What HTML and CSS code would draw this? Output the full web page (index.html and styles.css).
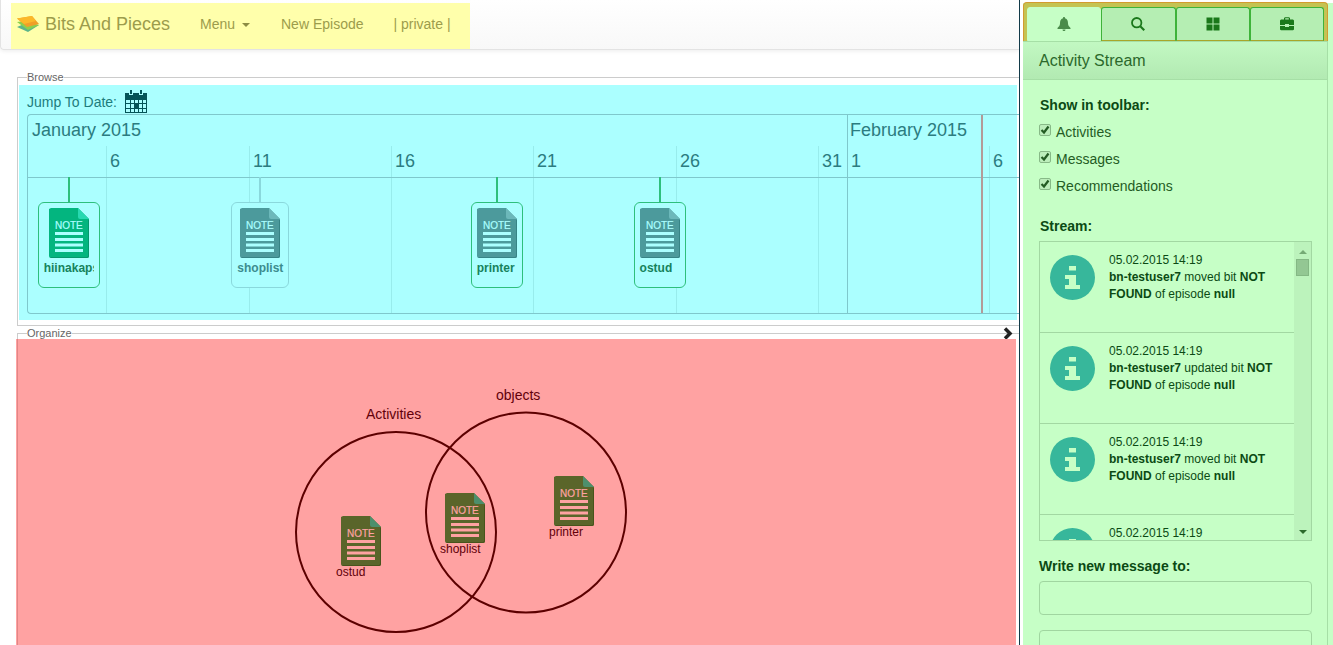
FILE: index.html
```html
<!DOCTYPE html>
<html lang="en">
<head>
<meta charset="utf-8">
<title>Bits And Pieces</title>
<link rel="stylesheet" href="styles.css">
</head>
<body>
<svg class="sprite" aria-hidden="true">
  <symbol id="note" viewBox="0 0 40 50">
    <path d="M2 0H29L40 11V48a2 2 0 0 1-2 2H2a2 2 0 0 1-2-2V1z"/>
    <path class="fold" d="M29 0L40 11H31a2 2 0 0 1-2-2z"/>
    <path class="edge" d="M39 12h1v36a2 2 0 0 1-2 2H2l-1-1h37l1-1z"/>
    <text class="note-text" x="6" y="21">NOTE</text>
    <path class="rule" d="M6 24h28v3H6zM6 30h28v3H6zM6 35.500h28v3H6zM6 41h28v3H6z"/>
  </symbol>
  <symbol id="info" viewBox="0 0 45 45">
    <circle cx="22.500" cy="22.500" r="22.500"/>
    <path class="mark" d="M19 11h7v4.500h-7zM15 20h11v10h4v4H15v-4h4v-6h-4z"/>
  </symbol>
</svg>
<div class="app">
  <div class="main">
    <header class="topbar">
      <nav class="nav">
        <a class="brand" href="#">
          <svg class="logo" viewBox="0 0 24 18" aria-hidden="true">
            <path fill="#5cb58a" d="M1 12l7-3 15 1-11 7z"/>
            <path fill="#8ccf4c" d="M1 7l8-1 14 4-11 5z"/>
            <path fill="#f09f28" d="M1 3.500l15-2.500 7 8-12 3z"/>
            <path fill="#fbb829" d="M1 3.500l15-2.500 4 5-12 3z"/>
          </svg>
          Bits And Pieces</a>
        <button class="nav-item" type="button">Menu <span class="caret"></span></button>
        <a class="nav-item" href="#">New Episode</a>
        <span class="nav-item">| private |</span>
      </nav>
    </header>

    <fieldset class="group">
      <legend>Browse</legend>
      <div class="browse">
        <button class="jump" type="button">Jump To Date:
          <svg class="calendar" viewBox="0 0 22 23" aria-hidden="true">
            <path d="M0 3h4v2h4V3h6v2h4V3h4v20H0z"/>
            <path d="M5 0h2v4H5zM15 0h2v4h-2z"/>
            <path class="cell" d="M1 10h4v3H1zM6 10h3v3H6zM10 10h3v3h-3zM14 10h3v3h-3zM18 10h3v3h-3zM1 14h4v4H1zM6 14h3v4H6zM14 14h3v4h-3zM18 14h3v4h-3zM1 19h4v3H1zM6 19h3v3H6zM10 19h3v3h-3zM14 19h3v3h-3zM18 19h3v3h-3z"/>
          </svg>
        </button>
        <div class="timeline">
          <div class="months"><span>January 2015</span><span>February 2015</span></div>
          <div class="days"><span></span><span>6</span><span>11</span><span>16</span><span>21</span><span>26</span><span>31</span><span class="first">1</span><span>6</span></div>
          <div class="lanes"><i></i><i></i><i></i><i></i><i></i><i></i><i></i><i class="first"></i><i></i></div>
          <div class="now" style="left:96%"></div>
          <div class="event fresh" style="left:4.1%"><div class="card"><svg class="note"><use href="#note"/></svg><b class="long">hiinakapsas</b></div></div>
          <div class="event dim" style="left:23.4%"><div class="card"><svg class="note"><use href="#note"/></svg><b>shoplist</b></div></div>
          <div class="event" style="left:47.2%"><div class="card"><svg class="note"><use href="#note"/></svg><b>printer</b></div></div>
          <div class="event" style="left:63.6%"><div class="card"><svg class="note"><use href="#note"/></svg><b>ostud</b></div></div>
        </div>
      </div>
    </fieldset>

    <fieldset class="group organize">
      <legend>Organize</legend>
      <button class="expand" type="button" aria-label="Expand"><svg viewBox="0 0 10 13"><path d="M2 1.500L7 6.500L2 11.500" fill="none" stroke="#222" stroke-width="3.500"/></svg></button>
      <div class="canvas">
        <svg class="circles" viewBox="0 0 640 310" aria-hidden="true"><circle cx="380" cy="193" r="100"/><circle cx="510" cy="173.500" r="100"/></svg>
        <span class="set" style="left:350px;top:66px">Activities</span>
        <span class="set" style="left:480px;top:47px">objects</span>
        <div class="node" style="left:320px;top:177px"><svg class="note"><use href="#note"/></svg>ostud</div>
        <div class="node" style="left:424px;top:154px"><svg class="note"><use href="#note"/></svg>shoplist</div>
        <div class="node" style="left:533px;top:137px"><svg class="note"><use href="#note"/></svg>printer</div>
      </div>
    </fieldset>
  </div>

  <aside class="side">
    <div class="panel">
      <div class="tabs">
        <button class="tab active" type="button" aria-label="Activity stream"><svg viewBox="0 0 14 14"><path d="M7 0c.8 0 1 .6 1 1.200C10.500 2 11 4 11 6.500c0 2.500 1.500 3 2.500 4.500v1H.5v-1C1.500 9.500 3 9 3 6.500 3 4 3.500 2 6 1.200 6 .6 6.200 0 7 0zM5.500 12.500h3c0 2-3 2-3 0z"/></svg></button>
        <button class="tab" type="button" aria-label="Search"><svg viewBox="0 0 14 14"><circle cx="5.700" cy="5.700" r="4.700" fill="none" stroke="#1a781a" stroke-width="1.800"/><path d="M8.500 10L10 8.500l4 4-1.500 1.500z"/></svg></button>
        <button class="tab" type="button" aria-label="Bits"><svg viewBox="0 0 14 14"><path d="M.5 .5h6v6h-6zM7.500 .5h6v6h-6zM.5 7.500h6v6h-6zM7.500 7.500h6v6h-6z"/></svg></button>
        <button class="tab" type="button" aria-label="Toolbox"><svg viewBox="0 0 14 14"><path fill-rule="evenodd" d="M4 2.500V1L5 .2h4l1 .8v1.500h3l1 1V8H9V7H5v1H0V3.500l1-1zM5.200 2.500h3.600V1.300H5.200zM0 9h5v1h4V9h5v3.500l-1 .8H1l-1-.8z"/></svg></button>
      </div>
      <h2 class="heading">Activity Stream</h2>
      <div class="content">
        <h3>Show in toolbar:</h3>
        <label class="check"><input type="checkbox" checked>Activities</label>
        <label class="check"><input type="checkbox" checked>Messages</label>
        <label class="check"><input type="checkbox" checked>Recommendations</label>
        <h3 class="stream-title">Stream:</h3>
        <div class="stream">
          <div class="list">
            <div class="item"><svg class="info"><use href="#info"/></svg><p>05.02.2015 14:19<br><b>bn-testuser7</b> moved bit <b>NOT FOUND</b> of episode <b>null</b></p></div>
            <div class="item"><svg class="info"><use href="#info"/></svg><p>05.02.2015 14:19<br><b>bn-testuser7</b> updated bit <b>NOT FOUND</b> of episode <b>null</b></p></div>
            <div class="item"><svg class="info"><use href="#info"/></svg><p>05.02.2015 14:19<br><b>bn-testuser7</b> moved bit <b>NOT FOUND</b> of episode <b>null</b></p></div>
            <div class="item"><svg class="info"><use href="#info"/></svg><p>05.02.2015 14:19</p></div>
          </div>
          <div class="scroll"><span class="up"></span><span class="thumb"></span><span class="down"></span></div>
        </div>
        <label class="message" for="to">Write new message to:</label>
        <input class="field" id="to" type="text">
        <textarea class="field area" aria-label="Message"></textarea>
      </div>
    </div>
  </aside>
</div>
</body>
</html>
```
FILE: styles.css
```css
* { box-sizing: border-box; }
body { margin: 0; background: #fff; font: 14px/20px "Liberation Sans", Arial, sans-serif; color: #0b4a14; }
button { font: inherit; color: inherit; background: none; border: 0; padding: 0; }
a { color: inherit; text-decoration: none; }
.sprite { position: absolute; width: 0; height: 0; }

.app { display: flex; height: 100vh; overflow: hidden; }
.main { flex: 1; min-width: 0; display: flex; flex-direction: column; overflow: hidden; border-right: 1px solid #123a48; }

.topbar { height: 50px; flex: none; padding: 3px 10px 0; background: linear-gradient(#fff, #f8f8f8); border: 1px solid #e3e3e3; border-width: 0 0 1px 1px; border-radius: 0 0 0 4px; box-shadow: 0 1px 4px rgba(0, 0, 0, .08); }
.nav { display: inline-flex; align-items: center; gap: 30px; height: 46px; padding: 0 19px 4px 5px; background: #ffffab; color: #9c9c4c; }
.brand { display: flex; align-items: center; gap: 5px; font-size: 18px; }
.logo { width: 24px; height: 18px; }
.caret { display: inline-block; margin: 0 1px 0 3px; vertical-align: middle; border: 4px solid transparent; border-top-color: #8c8c44; border-bottom: 0; }

.group { flex: none; min-width: 0; margin: 21px -3px 0 17px; padding: 2px 4px 5px 1px; border: 1px solid #ccc; }
legend { margin-left: 8px; padding: 0; font-size: 11px; line-height: 12px; color: #666; }
.browse { padding: 4px 0 6px 8px; background: #abffff; color: #147d7d; }
.jump { display: flex; align-items: center; gap: 8px; height: 25px; color: #1e7c7c; }
.calendar { width: 22px; height: 23px; fill: #045458; }
.cell { fill: #abffff; }

.timeline { position: relative; height: 200px; margin-right: -4px; display: flex; flex-direction: column; border: 1px solid #7fc8cc; border-right: 0; border-radius: 4px 0 0 4px; overflow: hidden; color: #2c7c80; font-size: 18px; }
.months { display: grid; grid-template-columns: 819fr 174fr; height: 31px; line-height: 30px; }
.months span { padding-left: 4px; }
.months span + span { padding-left: 2px; border-left: 1px solid #7fc8cc; }
.days, .lanes { display: grid; grid-template-columns: 78fr 143fr 142fr 142fr 143fr 142fr 29fr 142fr 32fr; }
.days { height: 32px; line-height: 30px; border-bottom: 1px solid #7fc8cc; }
.days span { padding-left: 3px; border-left: 1px solid #98ecec; }
.lanes { flex: 1; }
.lanes i { border-left: 1px solid #98ecec; }
.days span:first-child, .lanes i:first-child { border: 0; }
.days .first, .lanes .first { border-left-color: #7fc8cc; }
.now { position: absolute; top: 0; bottom: 0; width: 2px; background: #b39a98; }
.event { position: absolute; top: 62px; display: flex; flex-direction: column; align-items: center; transform: translateX(-50%); color: #16825c; --line: #2ebf7c; }
.event::before { content: ""; width: 2px; height: 25px; background: var(--line); }
.event.dim { color: #3c8c8e; --line: #8ad8dc; }
.card { min-width: 52px; height: 86px; padding: 5px; display: flex; flex-direction: column; align-items: center; border: 1px solid var(--line); border-radius: 6px; background: #abffff; font-size: 12px; line-height: 14px; }
.card b { align-self: flex-start; margin-top: 3px; }
.card .long { width: 50px; overflow: hidden; }

.note { display: block; flex: none; width: 40px; height: 50px; fill: #4c9a9c; --paper: #abffff; --fold: #6cb8ba; --edge: #368486; }
.note-text, .rule { fill: var(--paper); }
.note-text { font: 10px "Liberation Sans", Arial, sans-serif; stroke: var(--paper); stroke-width: .2px; }
.fold { fill: var(--fold); }
.edge { fill: var(--edge); }
.fresh .note { fill: #03b57f; --fold: #28d8b0; --edge: #04986c; }

.organize { position: relative; flex: 1; margin-top: 1px; padding: 0 5px 0 1px; border-bottom: 0; }
.canvas { position: relative; height: 100%; min-height: 306px; margin-left: -3px; background: linear-gradient(90deg, #ffa2a2 1px, #e08686 1px, #e08686 2px, #ffa2a2 2px); color: #62000a; }
.circles { position: absolute; width: 640px; height: 310px; fill: none; stroke: #5c0000; stroke-width: 2px; }
.set, .node { position: absolute; }
.set { line-height: 18px; }
.node { font-size: 12px; line-height: 13px; }
.node .note { margin-left: 5px; fill: #5a652a; --paper: #ffa2a2; --fold: #4d8f6c; --edge: #48541c; }
.expand { position: absolute; right: 8px; top: -12px; width: 10px; height: 13px; line-height: 0; }
.expand svg { width: 10px; height: 13px; }

.side { width: 313px; flex: none; padding: 2px 0 0 3px; overflow: hidden; }
.panel { height: 100%; padding-right: 5px; background: linear-gradient(#c6ffc6, #c6ffc6) 0 1px no-repeat; }
.tabs { display: flex; height: 39px; padding: 4px 3px 0; border: 1px solid #d39b30; border-width: 1px 1px 0; border-radius: 4px 4px 0 0; background: #c4c352; }
.tab { flex: 1; display: flex; align-items: center; justify-content: center; background: #b5eeb3; border: 1px solid #3eb33a; border-bottom-color: #a8a62a; border-radius: 3px 3px 0 0; fill: #1a781a; }
.tab.active { background: #c6ffc6; border-color: #c6ffc6; fill: #4a8c4a; }
.tab svg { width: 14px; height: 14px; margin-bottom: 1px; }
.heading { margin: 0; height: 39px; padding-left: 16px; font-size: 16px; font-weight: normal; line-height: 38px; color: #2b682b; background: linear-gradient(#c2f8c2, #b2eab2); border: 1px solid #a6dfa6; border-width: 1px 1px 1px 0; }
.content { height: 100%; padding: 15px 15px 0 16px; border-right: 1px solid #a6dfa6; }
h3 { margin: 0 0 7px; padding-left: 1px; font-size: 14px; line-height: 20px; }
.check { display: flex; align-items: flex-start; gap: 5px; height: 27px; color: #245c24; }
.check input { appearance: none; flex: none; width: 12px; height: 12px; margin: 2px 0 0; border: 1px solid #87b987; border-radius: 2px; background: #bceebb; }
.check input:checked { background: url("data:image/svg+xml,%3Csvg xmlns='http://www.w3.org/2000/svg' viewBox='0 0 10 10'%3E%3Cpath d='M1.500 5L4 7.500L8.500 1.500' fill='none' stroke='%23245c24' stroke-width='2.200'/%3E%3C/svg%3E") #bceebb; }
.stream-title { margin: 13px 0 5px; }
.stream { display: flex; height: 300px; border: 1px solid #a2d8a2; overflow: hidden; font-size: 12px; line-height: 17px; }
.list { flex: 1; min-width: 0; }
.item { display: flex; gap: 14px; height: 91px; padding: 10px 10px 0; border-bottom: 1px solid #a2d8a2; }
.item p { margin: 0; }
.info { flex: none; width: 45px; height: 45px; margin-top: 3px; fill: #37b79b; }
.mark { fill: #c6ffc6; }
.scroll { width: 17px; display: flex; flex-direction: column; align-items: center; padding: 8px 0 6px; background: #bcf3bc; }
.up, .down { border: 4px solid transparent; }
.up { border-top: 0; border-bottom-color: #74aa74; }
.down { margin-top: auto; border-bottom: 0; border-top-color: #2c6a2c; }
.thumb { width: 13px; height: 17px; margin-top: 5px; background: #93c793; border: 1px solid #84b884; }
.message { display: block; margin: 15px 0 5px; font-weight: bold; }
.field { display: block; width: 100%; height: 34px; padding: 6px 12px; border: 1px solid #a0d6a0; border-radius: 4px; background: none; font: inherit; }
.area { height: 90px; margin-top: 15px; resize: none; }
```
